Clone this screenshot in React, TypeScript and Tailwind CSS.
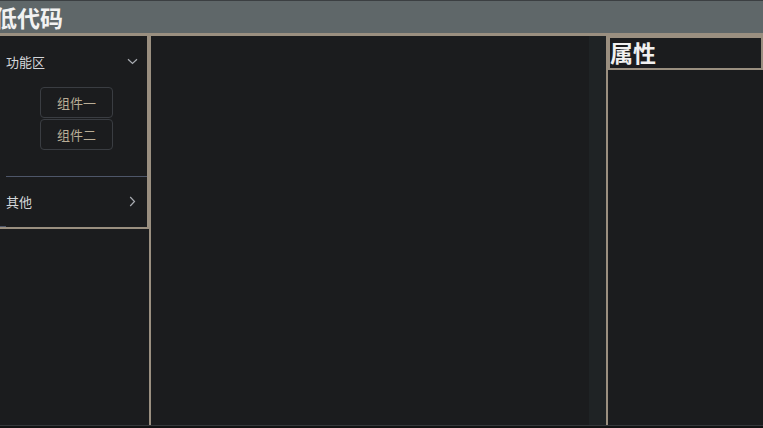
import React from "react";

const font = { fontFamily: '"Noto Sans CJK SC", "Noto Sans", sans-serif' };

function ChevronDown() {
  return (
    <svg width="11" height="7" viewBox="0 0 11 7" fill="none">
      <path d="M1 1.2 L5.5 5.5 L10 1.2" stroke="#a9acb2" strokeWidth="1.2" />
    </svg>
  );
}

function ChevronRight() {
  return (
    <svg width="7" height="11" viewBox="0 0 7 11" fill="none">
      <path d="M1.2 1 L5.5 5.5 L1.2 10" stroke="#a9acb2" strokeWidth="1.2" />
    </svg>
  );
}

export default function App() {
  return (
    <div
      className="w-[763px] h-[428px] bg-[#1b1c1e] flex flex-col overflow-hidden border-t border-[#3b3f42]"
      style={font}
    >
      <div className="h-[35px] shrink-0 bg-[#5f6769] border-b-[3px] border-[#9a8f80] flex items-center overflow-hidden">
        <span className="ml-[-6px] text-[23px] font-bold text-[#f2f2f2] leading-none whitespace-nowrap">
          低代码
        </span>
      </div>
      <div className="flex-1 flex min-h-0">
        <div className="w-[151px] shrink-0 border-r-2 border-[#9a8f80] flex flex-col">
          <div className="w-[149px] border-r-2 border-b-2 border-[#9a8f80] flex flex-col">
            <div className="h-[51px] flex items-center justify-between pl-[6px] pr-[9px]">
              <span className="text-[13px] text-[#d4d6da]">功能区</span>
              <ChevronDown />
            </div>
            <div className="flex flex-col gap-[1px] pl-[40px]">
              <div className="w-[73px] h-[31px] border border-[#3a3d42] rounded-[4px] flex items-center justify-center text-[13px] text-[#b9ad96]">
                组件一
              </div>
              <div className="w-[73px] h-[31px] border border-[#3a3d42] rounded-[4px] flex items-center justify-center text-[13px] text-[#b9ad96]">
                组件二
              </div>
            </div>
            <div className="h-[26px]" />
            <div className="ml-[6px] h-[1px] bg-[#4e5669]" />
            <div className="h-[49px] flex items-center justify-between pl-[6px] pr-[11px]">
              <span className="text-[13px] text-[#d4d6da]">其他</span>
              <ChevronRight />
            </div>
            <div className="w-[6px] h-[1px] bg-[#4e5669]" />
          </div>
        </div>
        <div className="flex-1" />
        <div className="w-[17px] shrink-0 bg-[#1f2325]" />
        <div className="w-[157px] shrink-0 border-l-2 border-[#9a8f80] flex flex-col">
          <div className="h-[34px] border-2 border-[#9a8f80] flex items-center">
            <span className="mt-[-1px] text-[23px] font-bold text-[#f0f0f0] leading-none">
              属性
            </span>
          </div>
        </div>
      </div>
      <div className="h-[3px] shrink-0 border-t border-[#35383b] bg-[#121314]" />
    </div>
  );
}
